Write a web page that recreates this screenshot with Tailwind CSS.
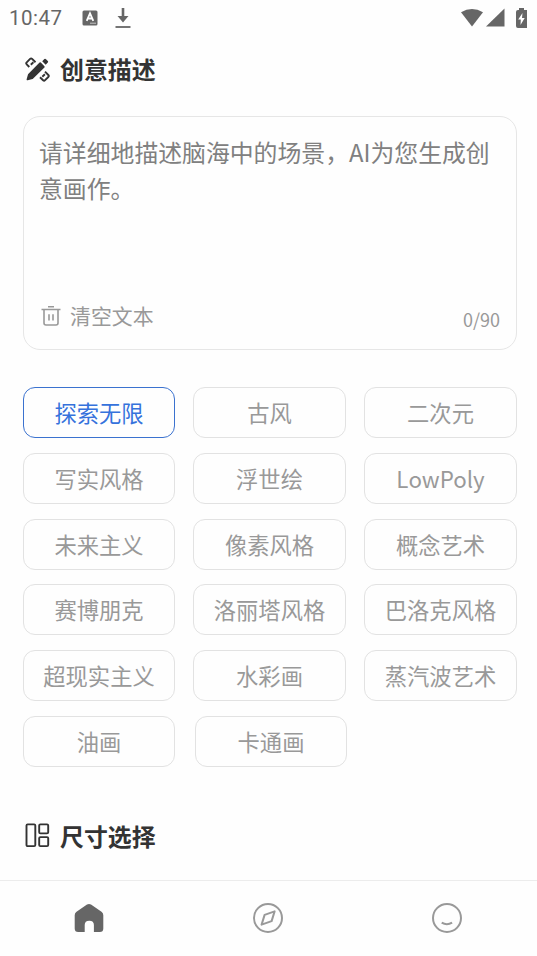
<!DOCTYPE html>
<html lang="zh-CN">
<head>
<meta charset="utf-8">
<title>创意描述</title>
<script src="https://cdn.jsdelivr.net/npm/@tailwindcss/browser@4"></script>
</head>
<body class="bg-[#fefefe]">
<div class="flex h-[956px] w-[537px] flex-col overflow-hidden bg-[#fefefe] font-['Noto_Sans_CJK_SC',sans-serif] text-[#999]">
  <header class="flex h-[36px] shrink-0 items-center pl-[9px] text-[#666]">
    <span class="w-[73px] pt-px font-[Roboto,sans-serif] text-[20.5px] tracking-[0.5px]">10:47</span>
    <svg class="h-4 w-4" viewBox="0 0 16 16"><rect x=".5" y=".5" width="15" height="15" rx="1.5" fill="#666"/><path d="M4.7 10.8 8 3.3l3.3 7.5M5.8 8.5h4.4" fill="none" stroke="#fff" stroke-width="1.8"/><path d="M8 13.2h6" stroke="#ddd" stroke-width=".8"/></svg>
    <svg class="ml-[17px] h-5 w-4" viewBox="0 0 16 20"><path d="M8 0v9" stroke="#666" stroke-width="2.6"/><path d="M2.500 8h11L8 14.500z" fill="#666"/><path d="M.5 19h15" stroke="#666" stroke-width="1.8"/></svg>
    <svg class="mr-px ml-auto h-[20px] w-[24px]" viewBox="0 0 24 20"><path d="M1 4.200Q12-2.300 23 4.200L12 18.500z" fill="#666"/></svg>
    <svg class="ml-px h-[20px] w-[19px]" viewBox="0 0 19 20"><path d="M18.500.5v18H0z" fill="#666"/></svg>
    <svg class="mr-[10px] ml-[11px] h-[21px] w-[11px]" viewBox="0 0 11 21"><path d="M3 0h5v2h3v18H2Q0 20 0 18V4Q0 2 2 2h1z" fill="#666"/><path d="M6.500 5 2.200 11.500h2.600L4.500 17l4.200-7H6z" fill="#fff"/></svg>
  </header>

  <main class="flex min-h-0 flex-1 flex-col pr-5 pl-[23px]">
    <h1 class="flex h-[66px] shrink-0 items-center gap-[10px] pl-[2px] text-[23.9px] font-bold text-[#333]">
      <svg class="h-[25px] w-[25px]" viewBox="0 0 25 25" fill="none" stroke="#333"><path d="m2.500 22.400 1.400-4.800L15.200 6.200l3.600 3.600L7.300 21.100z" fill="#333" stroke-width="1.8" stroke-linejoin="round"/><path d="m17.200 4.200 2.200-2.100q.8-.7 1.600.1l1.800 1.800q.8.8 0 1.600l-2.100 2.100z" fill="#333" stroke="none"/><path d="M4.300 10 1.700 7.300q-1-1 0-2l3.400-3.400q1-1 2 0l3.400 3.300M5.800 7.700l2.600-2.500M15 20.200l3.100 3q1 1 2 0l3.200-3.200q1-1 0-2L20 14.700M17.300 19.700l2.600-2.500" stroke-width="1.9"/></svg>
      <span>创意描述</span>
    </h1>

    <section class="mt-[14px] flex h-[234px] shrink-0 flex-col rounded-[17px] border border-[#e6e6e6] pt-[17px] pr-4 pl-[15px]">
      <p class="text-[23.85px] leading-[36px] text-[#808080]">请详细地描述脑海中的场景，AI为您生成创意画作。</p>
      <div class="mt-auto mb-[17px] flex h-8 items-center">
        <svg class="ml-[2px] h-[22px] w-5" viewBox="0 0 20 22" fill="none" stroke="#999" stroke-width="1.6"><path d="M.5 4.500h19M7 1.800h6M3 4.500V18q0 2 2 2h10q2 0 2-2V4.500M8 9.300v6.200M12 9.300v6.200"/></svg>
        <span class="ml-[9px] text-[20.9px]">清空文本</span>
        <span class="relative top-[3px] ml-auto text-[18px]">0/90</span>
      </div>
    </section>

    <section class="mt-[37px] flex flex-col gap-[14.8px] text-[22.3px] leading-[49px]">
      <div class="grid grid-cols-[152px_153px_153px] gap-[18px] text-center"><div class="h-[51px] rounded-[12px] border border-[#3b72cf] text-[#3572dc]">探索无限</div><div class="h-[51px] rounded-[12px] border border-[#e2e2e2]">古风</div><div class="h-[51px] rounded-[12px] border border-[#e2e2e2]">二次元</div></div>
      <div class="grid grid-cols-[152px_153px_153px] gap-[18px] text-center"><div class="h-[51px] rounded-[12px] border border-[#e2e2e2]">写实风格</div><div class="h-[51px] rounded-[12px] border border-[#e2e2e2]">浮世绘</div><div class="h-[51px] rounded-[12px] border border-[#e2e2e2]">LowPoly</div></div>
      <div class="grid grid-cols-[152px_153px_153px] gap-[18px] text-center"><div class="h-[51px] rounded-[12px] border border-[#e2e2e2]">未来主义</div><div class="h-[51px] rounded-[12px] border border-[#e2e2e2]">像素风格</div><div class="h-[51px] rounded-[12px] border border-[#e2e2e2]">概念艺术</div></div>
      <div class="grid grid-cols-[152px_153px_153px] gap-[18px] text-center"><div class="h-[51px] rounded-[12px] border border-[#e2e2e2]">赛博朋克</div><div class="h-[51px] rounded-[12px] border border-[#e2e2e2]">洛丽塔风格</div><div class="h-[51px] rounded-[12px] border border-[#e2e2e2]">巴洛克风格</div></div>
      <div class="grid grid-cols-[152px_153px_153px] gap-[18px] text-center"><div class="h-[51px] rounded-[12px] border border-[#e2e2e2]">超现实主义</div><div class="h-[51px] rounded-[12px] border border-[#e2e2e2]">水彩画</div><div class="h-[51px] rounded-[12px] border border-[#e2e2e2]">蒸汽波艺术</div></div>
      <div class="flex gap-5 text-center"><div class="h-[51px] w-[152px] rounded-[12px] border border-[#e2e2e2]">油画</div><div class="h-[51px] w-[152px] rounded-[12px] border border-[#e2e2e2]">卡通画</div></div>
    </section>

    <h2 class="mt-[51px] flex h-9 items-center gap-[10px] pl-[2px] text-[23.9px] font-bold text-[#333]">
      <svg class="h-[25px] w-[25px]" viewBox="0 0 25 25" fill="none" stroke="#333" stroke-width="1.9"><rect x="1.500" y="1.400" width="8.800" height="21.700" rx="1.200"/><rect x="14.200" y="1.400" width="9" height="9" rx="1.200"/><rect x="14.200" y="14.100" width="9" height="9" rx="1.200"/></svg>
      <span>尺寸选择</span>
    </h2>
  </main>

  <nav class="grid h-[76px] shrink-0 grid-cols-3 place-items-center border-t border-[#ececec] pr-px pb-px">
    <svg class="h-[30px] w-[30px]" viewBox="0 0 30 30"><path d="M13 1.600q2-1.300 4 0l10.500 7.200q1.800 1.300 1.800 3.500v13.200q0 3.500-3.500 3.500h-5.900V22q0-4.300-4.600-4.300T10.700 22v7H4.200Q.7 29 .7 25.500V12.300q0-2.200 1.800-3.500z" fill="#666"/></svg>
    <svg class="h-[32px] w-[32px]" viewBox="0 0 32 32" fill="none" stroke="#999" stroke-width="2"><circle cx="16" cy="16" r="14"/><path d="m22.600 9.400-3 9.700L9.600 22.600l3-9.700z" stroke-linejoin="round"/></svg>
    <svg class="h-[32px] w-[32px]" viewBox="0 0 32 32" fill="none" stroke="#999" stroke-width="2"><circle cx="16" cy="16" r="14"/><path d="M10.700 20.700q5.200 3.300 10.400 0"/></svg>
  </nav>
</div>
</body>
</html>
